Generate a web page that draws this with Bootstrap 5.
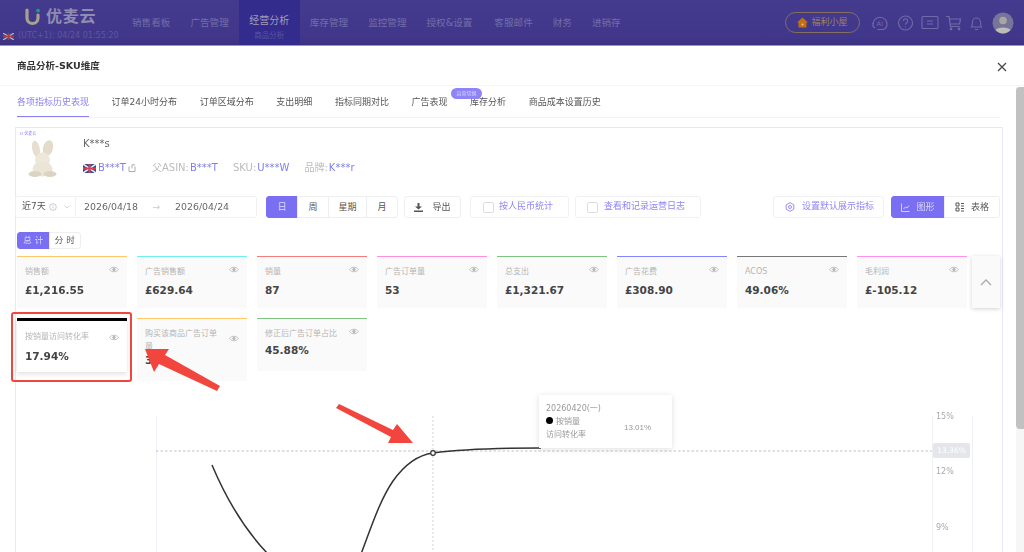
<!DOCTYPE html>
<html lang="zh-CN">
<head>
<meta charset="utf-8">
<title>商品分析-SKU维度</title>
<link href="https://cdn.jsdelivr.net/npm/bootstrap@5.3.0/dist/css/bootstrap.min.css" rel="stylesheet">
<style>
html,body{height:552px;overflow:hidden;background:#fff}
body{font-family:"DejaVu Sans","Noto Sans CJK SC",sans-serif;font-size:9px;color:#444;width:1024px}
.shot{width:1024px;height:552px;position:relative;overflow:hidden;filter:blur(.6px)}
.topbar{height:46px;background:linear-gradient(#453b8e,#40368a 85%,#3a3180);border-bottom:1px solid #9a98ad}
.brand-col{width:122px;flex:none;padding:6px 0 0 3px}
.logo-row{padding-left:22px;height:21px}
.logo-txt{font-size:16px;font-weight:700;color:#908cb2;line-height:20px;margin-left:6px;letter-spacing:.7px}
.clock{font-size:8px;color:#5d57a0;line-height:10px;margin-top:4px;white-space:nowrap}
.mainnav a{display:block;height:45px;padding:16px 10px 0;font-size:9.6px;color:#726ea9;text-decoration:none;text-align:center;white-space:nowrap;line-height:14px}
.mainnav a.amp{padding-right:12px}
.mainnav a.on{background:#342c8c;color:#a09db8;font-size:10px;width:61px;padding:14px 0 0}
.mainnav a small{display:block;font-size:7.5px;color:#5a55a4;line-height:9px;margin-top:3px}
.fuli{width:75px;height:21px;border:1px solid #85705f;border-radius:11px;margin:12px 0 0 auto;color:#9c8560;font-size:9px;gap:3px}
.hicons{height:46px;margin-left:7px;padding-right:10px}
.hicons svg{display:block}
.ava{margin-left:4px}
.dlg-head{height:40px;padding:2px 17px 0;border-bottom:1px solid #f4f4f6}
.dlg-title{font-size:9.5px;font-weight:700;color:#333}
.tabbar{height:32px;margin:0 24px 0 17px;border-bottom:1px solid #f3f3f5;gap:22.6px}
.tab-item{font-size:9px;color:#555;line-height:33px;height:31px;position:relative;white-space:nowrap}
.tab-item.on{color:#8a80f0;border-bottom:1.5px solid #8a80f0}
.tip-badge{position:absolute;left:-19px;top:2px;width:31px;height:11px;background:#8f84f7;border-radius:6px;font-size:5px;line-height:11px;color:#d8d4ff;text-align:center}
.panel{position:absolute;left:15px;top:127px;width:988px;height:440px;border:1px solid #e8e6ff}
.prod{height:68px;position:relative}
.wm{position:absolute;left:4px;top:3px;font-size:4px;color:#8a80f0;line-height:6px}
.bunny{position:absolute;left:12px;top:11px}
.prod-name{position:absolute;left:67px;top:10px;font-size:10px;color:#666;line-height:11px}
.prod-meta{position:absolute;left:67px;top:34px;font-size:10px;line-height:12px;color:#bbb;gap:2px;white-space:nowrap}
.prod-meta b{font-weight:400;color:#7f80ee}
.prod-meta span b{margin-left:1px}
.share{margin-right:14px}
.meta-gap{margin-left:13px}
.tools{height:22px;align-items:stretch;font-size:9px;margin-left:-1px}
.picker{width:61px;border:1px solid #f1f1f3;border-radius:3px 0 0 3px;padding-left:6px;color:#555;gap:3px}
.dates{width:181px;border:1px solid #f1f1f3;border-left:0;border-radius:0 3px 3px 0;padding:0 0 0 8px;color:#666;font-size:9.4px}
.arrow-mark{color:#ccc;width:37px;text-align:center}
.tgl{padding:0;border:1px solid #eeeef0;border-radius:3px;font-size:9px;color:#555;background:#fff;display:flex;align-items:center;justify-content:center;line-height:1}
.tgl.on,.btn.tgl.on{background:#7a6ff2;color:#dcd9ff;border-color:#7a6ff2}
.btn-group .tgl{border-radius:0}
.btn-group .tgl:first-child{border-radius:3px 0 0 3px}
.btn-group .tgl:last-child{border-radius:0 3px 3px 0}
.period{margin-left:9px}
.w-a{width:32px}.w-b{width:39px}.w-c{width:57px;margin-left:6px;gap:9px}
.ck{height:22px;border:1px solid #f1f1f3;border-radius:3px;color:#8f85f3;font-size:9px;gap:5px;padding-left:12px}
.ck i{display:block;width:11px;height:11px;border:1px solid #ddd;border-radius:2px;background:#fff}
.ck-a{width:99px;margin-left:9px}.ck-b{width:126px;margin-left:6px;gap:6px;padding-left:11px}
.setdef{width:111px;margin-left:72px;gap:7px;padding-left:11px}
.w-d{width:54px;gap:6px}.w-e{width:56px;gap:6px}.view-sw{margin-left:7px}
.sub-sw{margin:14px 0 7px 1px;height:17px;width:64px}
.sub-sw .tgl{width:32px;font-size:8.5px;letter-spacing:3px;padding-left:3px}
.kpis{margin-left:1px;display:grid;grid-template-columns:repeat(8,110px);column-gap:10px;row-gap:10px;align-items:start;width:960px}
.tile{background:#fafafa;border-top:1.5px solid;height:52px;padding:8px 8px 0 8px;position:relative}
.t-label{font-size:8px;color:#b5b5b5;line-height:13px;width:76px}
.t-val{font-size:10.5px;font-weight:700;color:#444;line-height:13px;margin-top:6px;white-space:nowrap}
.eye{position:absolute;right:8px;top:9px}
.tile.sel{background:#fff;border-top:3px solid #000;height:54px;padding-top:9px;box-shadow:0 2px 5px rgba(0,0,0,.12)}
.tile.sel .eye{top:13px}
.tile.sel .t-val{margin-top:7px}
.tile.tall{height:63px;padding-top:8px}
.tile.tall .eye{top:16px}
.tile.tall .t-val{margin-top:1px}
.tile.mid{height:53px;padding-top:8px}
.tile.mid .t-label{width:84px;white-space:nowrap}
.tile.mid .eye{top:9px}
.tile.mid .t-val{margin-top:4px}
.collapse-box{position:absolute;left:956px;top:128px;width:28px;height:52px;background:#fafafa;box-shadow:0 1px 4px rgba(0,0,0,.18)}
.chart{position:absolute;left:0;top:0;pointer-events:none}
.tipbox{position:absolute;left:539px;top:395px;width:133px;height:53px;background:#fff;box-shadow:0 1px 6px rgba(0,0,0,.13);padding:7px 7px;font-size:8px;line-height:13px;color:#999}
.tipbox .dot{display:inline-block;width:7px;height:7px;background:#000;border-radius:50%;margin-right:3px}
.tipbox .tv{position:absolute;left:85px;top:26px;font-family:"Liberation Sans",sans-serif;font-size:8px}
.axlab{position:absolute;left:936px;font-size:8px;color:#aaa;line-height:10px}
.ax-a{top:412px}.ax-b{top:467px}.ax-c{top:523px}
.axcur{position:absolute;left:933px;top:443px;width:37px;height:15px;background:#e4e6ec;color:#fff;font-size:7.5px;line-height:15px;text-align:center;border-radius:2px}
.hilite{position:absolute;left:11px;top:312px;width:121px;height:70px;border:2px solid #f1453d;border-radius:3px}
.sbar{position:absolute;right:0;top:87px;width:8px;height:465px;background:#f6f6f6}
.sbar div{height:342px;background:#c1c1c1;border-radius:4px 0 0 4px}
</style>
</head>
<body>
<div class="shot">
  <header class="topbar d-flex align-items-start">
    <div class="brand-col">
      <div class="logo-row d-flex align-items-center">
        <svg width="15" height="18" viewBox="0 0 15 18"><path d="M2 2v8a5.5 5.5 0 0 0 11 0V7" fill="none" stroke="#a7a28f" stroke-width="3.2" stroke-linecap="round"/><circle cx="13" cy="2.6" r="1.9" fill="#1f9a86"/></svg>
        <span class="logo-txt">优麦云</span>
      </div>
      <div class="clock d-flex align-items-center gap-1">
        <svg width="11" height="7" viewBox="0 0 11 7"><rect width="11" height="7" fill="#3b4380"/><path d="M0 0l11 7M11 0L0 7" stroke="#b9b4c4" stroke-width="1.2"/><path d="M5.5 0v7M0 3.5h11" stroke="#a33a45" stroke-width="1.6"/></svg>
        <span>(UTC+1): 04/24 01:55:20</span>
      </div>
    </div>
    <nav class="mainnav d-flex">
      <a href="#">销售看板</a><a href="#">广告管理</a>
      <a href="#" class="on">经营分析<small>商品分析</small></a>
      <a href="#">库存管理</a><a href="#">监控管理</a><a href="#" class="amp">授权&amp;设置</a><a href="#">客服邮件</a><a href="#">财务</a><a href="#">进销存</a>
    </nav>
    <div class="fuli d-flex align-items-center justify-content-center">
      <svg width="11" height="11" viewBox="0 0 11 11"><path d="M5.5 .5L11 5.5H9.5V10.5H1.5V5.500H0z" fill="#c26f12"/><circle cx="5.5" cy="7.5" r="1" fill="#e8c98a"/></svg>
      <span>福利小屋</span>
    </div>
    <div class="hicons d-flex align-items-center">
      <svg width="26" height="20" viewBox="0 0 26 20" fill="none" stroke="#6f6bab" stroke-width="1.1"><path d="M6 11a7 7 0 1 1 14 .5c0 2.500-1.500 4-3.500 5h-6"/><path d="M6 9.500v4l2 1.500"/><text x="9.500" y="13" font-size="6.500" fill="#6f6bab" stroke="none">AI</text></svg>
      <svg width="25" height="20" viewBox="0 0 25 20" fill="none" stroke="#6f6bab" stroke-width="1.1"><circle cx="12.500" cy="10" r="7"/><path d="M10.300 8a2.200 2.200 0 1 1 3.200 2c-.8.500-1 .9-1 1.800M12.500 13.500v.9"/></svg>
      <svg width="24" height="20" viewBox="0 0 24 20" fill="none" stroke="#6f6bab" stroke-width="1.1"><path d="M5 3.500h14a1 1 0 0 1 1 1v10a1 1 0 0 1-1 1H5a1 1 0 0 1-1-1v-10a1 1 0 0 1 1-1zM9 8h6M9 11h6"/></svg>
      <svg width="23" height="20" viewBox="0 0 23 20" fill="none" stroke="#6f6bab" stroke-width="1.2"><path d="M4 3.500h3l1.500 10h9M7.500 6h11l-1 5h-9"/><circle cx="9" cy="16" r=".8"/><circle cx="17" cy="16" r=".8"/></svg>
      <svg width="23" height="20" viewBox="0 0 23 20" fill="none" stroke="#6f6bab" stroke-width="1.1"><path d="M6.500 14c1-1.500 1-3 1-5a4 4 0 0 1 8 0c0 2 0 3.500 1 5zM10 16.500h3"/></svg>
      <svg class="ava" width="22" height="22" viewBox="0 0 22 22"><circle cx="11" cy="11" r="10.500" fill="#77749a"/><circle cx="11" cy="8.500" r="3.800" fill="#a9a6a2"/><path d="M3.500 18c1.500-3.500 13.500-3.500 15 0a10 10 0 0 1-15 0z" fill="#bdbcb8"/></svg>
    </div>
  </header>

  <div class="dlg-head d-flex align-items-center justify-content-between">
    <span class="dlg-title">商品分析-SKU维度</span>
    <svg width="10" height="10" viewBox="0 0 10 10" stroke="#444" stroke-width="1.2"><path d="M1 1l8 8M9 1L1 9"/></svg>
  </div>

  <div class="tabbar d-flex">
    <div class="tab-item on">各项指标历史表现</div>
    <div class="tab-item">订单24小时分布</div>
    <div class="tab-item">订单区域分布</div>
    <div class="tab-item">支出明细</div>
    <div class="tab-item">指标同期对比</div>
    <div class="tab-item">广告表现</div>
    <div class="tab-item">库存分析<span class="tip-badge">运营切换</span></div>
    <div class="tab-item">商品成本设置历史</div>
  </div>

  <section class="panel">
    <div class="prod">
      <div class="wm">U 优麦云</div>
      <svg class="bunny" width="30" height="40" viewBox="0 0 30 40">
        <ellipse cx="8" cy="10" rx="3.800" ry="8.500" fill="#e6dfd0" transform="rotate(-12 8 10)"/>
        <ellipse cx="20" cy="9" rx="5" ry="8" fill="#e4dccb" transform="rotate(14 20 9)"/>
        <circle cx="14.500" cy="21" r="7.500" fill="#eee8da"/>
        <ellipse cx="14.500" cy="30" rx="10" ry="7.500" fill="#ebe5d7"/>
        <ellipse cx="7" cy="35" rx="6.500" ry="3" fill="#dcd4c3"/><ellipse cx="22" cy="35" rx="6.500" ry="3" fill="#dcd4c3"/>
      </svg>
      <div class="prod-name">K***s</div>
      <div class="prod-meta d-flex align-items-center">
        <svg width="13" height="9" viewBox="0 0 13 9"><rect width="13" height="9" rx="1.500" fill="#3a4a90"/><path d="M0 0l13 9M13 0L0 9" stroke="#eee" stroke-width="1.500"/><path d="M6.500 0v9M0 4.500h13" stroke="#d8404f" stroke-width="2"/></svg>
        <b>B***T</b>
        <svg class="share" width="8" height="8" viewBox="0 0 8 8" fill="none" stroke="#999" stroke-width=".8"><path d="M1 2.500v5h6v-5M4 4.500V.8M4 .8h3"/></svg>
        <span>父ASIN:<b>B***T</b></span>
        <span class="meta-gap">SKU:<b>U***W</b></span>
        <span class="meta-gap">品牌:<b>K***r</b></span>
      </div>
    </div>

    <div class="tools d-flex">
      <div class="picker d-flex align-items-center"><span>近7天</span>
        <svg width="8" height="8" viewBox="0 0 8 8" fill="none" stroke="#b9b9c8" stroke-width=".8"><circle cx="4" cy="4" r="3.300"/><path d="M4 3.500v2M4 2v.6"/></svg>
        <svg class="ms-1" width="6" height="4" viewBox="0 0 6 4" fill="none" stroke="#ccc" stroke-width=".8"><path d="M.5.500L3 3l2.500-2.500"/></svg>
      </div>
      <div class="dates d-flex align-items-center"><span>2026/04/18</span><span class="arrow-mark">→</span><span>2026/04/24</span></div>
      <div class="btn-group period">
        <button class="btn tgl on w-a" type="button">日</button>
        <button class="btn tgl w-a" type="button">周</button>
        <button class="btn tgl w-b" type="button">星期</button>
        <button class="btn tgl w-a" type="button">月</button>
      </div>
      <button class="btn tgl w-c" type="button">
        <svg width="9" height="9" viewBox="0 0 9 9" fill="#555"><path d="M3.500 0h2v3.500H8L4.500 6.500 1 3.500h2.500zM0 7.500h9V9H0z"/></svg>导出</button>
      <div class="ck ck-a d-flex align-items-center"><i></i>按人民币统计</div>
      <div class="ck ck-b d-flex align-items-center"><i></i>查看和记录运营日志</div>
      <div class="ck setdef d-flex align-items-center">
        <svg width="10" height="10" viewBox="0 0 10 10" fill="none" stroke="#8f85f3" stroke-width=".9"><path d="M5 .6l3.800 2.200v4.400L5 9.400 1.200 7.200V2.800z"/><circle cx="5" cy="5" r="1.500"/></svg>设置默认展示指标</div>
      <div class="btn-group view-sw">
        <button class="btn tgl on w-d" type="button"><svg width="9" height="9" viewBox="0 0 9 9" fill="none" stroke="#dcd9ff" stroke-width=".9"><path d="M.5.500v8h8M2.500 6l2-2 1.500 1 2-2.500"/></svg>图形</button>
        <button class="btn tgl w-e" type="button"><svg width="10" height="10" viewBox="0 0 10 10" fill="none" stroke="#555" stroke-width="1"><path d="M1 1h3v3H1zM1 6h3v3H1zM6 1.500h3M6 4h3M6 6.500h3M6 9h3"/></svg>表格</button>
      </div>
    </div>

    <div class="btn-group sub-sw d-flex">
      <button class="btn tgl on" type="button">总计</button>
      <button class="btn tgl" type="button">分时</button>
    </div>

    <div class="kpis">
      <div class="tile" style="border-color:#ffc76b"><div class="t-label">销售额</div><div class="t-val">£1,216.55</div><svg class="eye" width="10" height="7" viewBox="0 0 10 7" fill="none" stroke="#b8b8b8" stroke-width=".9"><path d="M.5 3.500C2.500.5 7.500.5 9.500 3.500 7.500 6.500 2.500 6.500.5 3.500z"/><circle cx="5" cy="3.500" r="1.300" fill="#b8b8b8"/></svg></div>
      <div class="tile" style="border-color:#6ff0ee"><div class="t-label">广告销售额</div><div class="t-val">£629.64</div><svg class="eye" width="10" height="7" viewBox="0 0 10 7" fill="none" stroke="#b8b8b8" stroke-width=".9"><path d="M.5 3.500C2.500.5 7.500.5 9.500 3.500 7.500 6.500 2.500 6.500.5 3.500z"/><circle cx="5" cy="3.500" r="1.300" fill="#b8b8b8"/></svg></div>
      <div class="tile" style="border-color:#f47c7c"><div class="t-label">销量</div><div class="t-val">87</div><svg class="eye" width="10" height="7" viewBox="0 0 10 7" fill="none" stroke="#b8b8b8" stroke-width=".9"><path d="M.5 3.500C2.500.5 7.500.5 9.500 3.500 7.500 6.500 2.500 6.500.5 3.500z"/><circle cx="5" cy="3.500" r="1.300" fill="#b8b8b8"/></svg></div>
      <div class="tile" style="border-color:#ff8fdc"><div class="t-label">广告订单量</div><div class="t-val">53</div><svg class="eye" width="10" height="7" viewBox="0 0 10 7" fill="none" stroke="#b8b8b8" stroke-width=".9"><path d="M.5 3.500C2.500.5 7.500.5 9.500 3.500 7.500 6.500 2.500 6.500.5 3.500z"/><circle cx="5" cy="3.500" r="1.300" fill="#b8b8b8"/></svg></div>
      <div class="tile" style="border-color:#7cc47f"><div class="t-label">总支出</div><div class="t-val">£1,321.67</div><svg class="eye" width="10" height="7" viewBox="0 0 10 7" fill="none" stroke="#b8b8b8" stroke-width=".9"><path d="M.5 3.500C2.500.5 7.500.5 9.500 3.500 7.500 6.500 2.500 6.500.5 3.500z"/><circle cx="5" cy="3.500" r="1.300" fill="#b8b8b8"/></svg></div>
      <div class="tile" style="border-color:#8484ff"><div class="t-label">广告花费</div><div class="t-val">£308.90</div><svg class="eye" width="10" height="7" viewBox="0 0 10 7" fill="none" stroke="#b8b8b8" stroke-width=".9"><path d="M.5 3.500C2.500.5 7.500.5 9.500 3.500 7.500 6.500 2.500 6.500.5 3.500z"/><circle cx="5" cy="3.500" r="1.300" fill="#b8b8b8"/></svg></div>
      <div class="tile" style="border-color:#777"><div class="t-label">ACOS</div><div class="t-val">49.06%</div><svg class="eye" width="10" height="7" viewBox="0 0 10 7" fill="none" stroke="#b8b8b8" stroke-width=".9"><path d="M.5 3.500C2.500.5 7.500.5 9.500 3.500 7.500 6.500 2.500 6.500.5 3.500z"/><circle cx="5" cy="3.500" r="1.300" fill="#b8b8b8"/></svg></div>
      <div class="tile" style="border-color:#ff90f0"><div class="t-label">毛利润</div><div class="t-val">£-105.12</div><svg class="eye" width="10" height="7" viewBox="0 0 10 7" fill="none" stroke="#b8b8b8" stroke-width=".9"><path d="M.5 3.500C2.500.5 7.500.5 9.500 3.500 7.500 6.500 2.500 6.500.5 3.500z"/><circle cx="5" cy="3.500" r="1.300" fill="#b8b8b8"/></svg></div>
      <div class="tile sel"><div class="t-label">按销量访问转化率</div><div class="t-val">17.94%</div><svg class="eye" width="10" height="7" viewBox="0 0 10 7" fill="none" stroke="#b8b8b8" stroke-width=".9"><path d="M.5 3.500C2.500.5 7.500.5 9.500 3.500 7.500 6.500 2.500 6.500.5 3.500z"/><circle cx="5" cy="3.500" r="1.300" fill="#b8b8b8"/></svg></div>
      <div class="tile tall" style="border-color:#ffc76b"><div class="t-label">购买该商品广告订单量</div><div class="t-val">39</div><svg class="eye" width="10" height="7" viewBox="0 0 10 7" fill="none" stroke="#b8b8b8" stroke-width=".9"><path d="M.5 3.500C2.500.5 7.500.5 9.500 3.500 7.500 6.500 2.500 6.500.5 3.500z"/><circle cx="5" cy="3.500" r="1.300" fill="#b8b8b8"/></svg></div>
      <div class="tile mid" style="border-color:#7cc47f"><div class="t-label">修正后广告订单占比</div><div class="t-val">45.88%</div><svg class="eye" width="10" height="7" viewBox="0 0 10 7" fill="none" stroke="#b8b8b8" stroke-width=".9"><path d="M.5 3.500C2.500.5 7.500.5 9.500 3.500 7.500 6.500 2.500 6.500.5 3.500z"/><circle cx="5" cy="3.500" r="1.300" fill="#b8b8b8"/></svg></div>
    </div>
    <div class="collapse-box d-flex align-items-center justify-content-center">
      <svg width="12" height="7" viewBox="0 0 12 7" fill="none" stroke="#aaa" stroke-width="1.300"><path d="M1 6l5-5 5 5"/></svg>
    </div>
  </section>

  <svg class="chart" width="1024" height="552" viewBox="0 0 1024 552" fill="none">
    <path d="M156.500 416V552M932.500 416V552M972.500 416V552" stroke="#eef0f5"/>
    <path d="M433 416V552" stroke="#c8c8c8" stroke-width=".8" stroke-dasharray="2 2"/>
    <path d="M156 451H932" stroke="#bbb" stroke-width=".9" stroke-dasharray="2.500 2"/>
    <path d="M212 465C228 503 245 530 268 554M361 554C372 525 380 500 393 481C405 464 418 455 433 453C455 450 500 448 541 448" stroke="#333" stroke-width="1.500"/>
    <circle cx="433" cy="453" r="2.300" fill="#fff" stroke="#333" stroke-width="1.200"/>
  </svg>

  <div class="axlab ax-a">15%</div>
  <div class="axlab ax-b">12%</div>
  <div class="axlab ax-c">9%</div>
  <div class="axcur">13.36%</div>

  <div class="tipbox">
    <div>20260420(一)</div>
    <div><span class="dot"></span>按销量</div>
    <div>访问转化率</div>
    <span class="tv">13.01%</span>
  </div>

  <div class="hilite"></div>
  <svg class="chart" width="1024" height="552" viewBox="0 0 1024 552">
    <path d="M145 349L169 349L165 355L220 386L217 391L159 364L154 372z" fill="#f1453d"/>
    <path d="M336 408L339 404L393 430L397 424L413 443L388 443L391 437z" fill="#f1453d"/>
  </svg>

  <div class="sbar"><div></div></div>
</div>
<script src="https://cdn.jsdelivr.net/npm/bootstrap@5.3.0/dist/js/bootstrap.bundle.min.js"></script>
</body>
</html>
